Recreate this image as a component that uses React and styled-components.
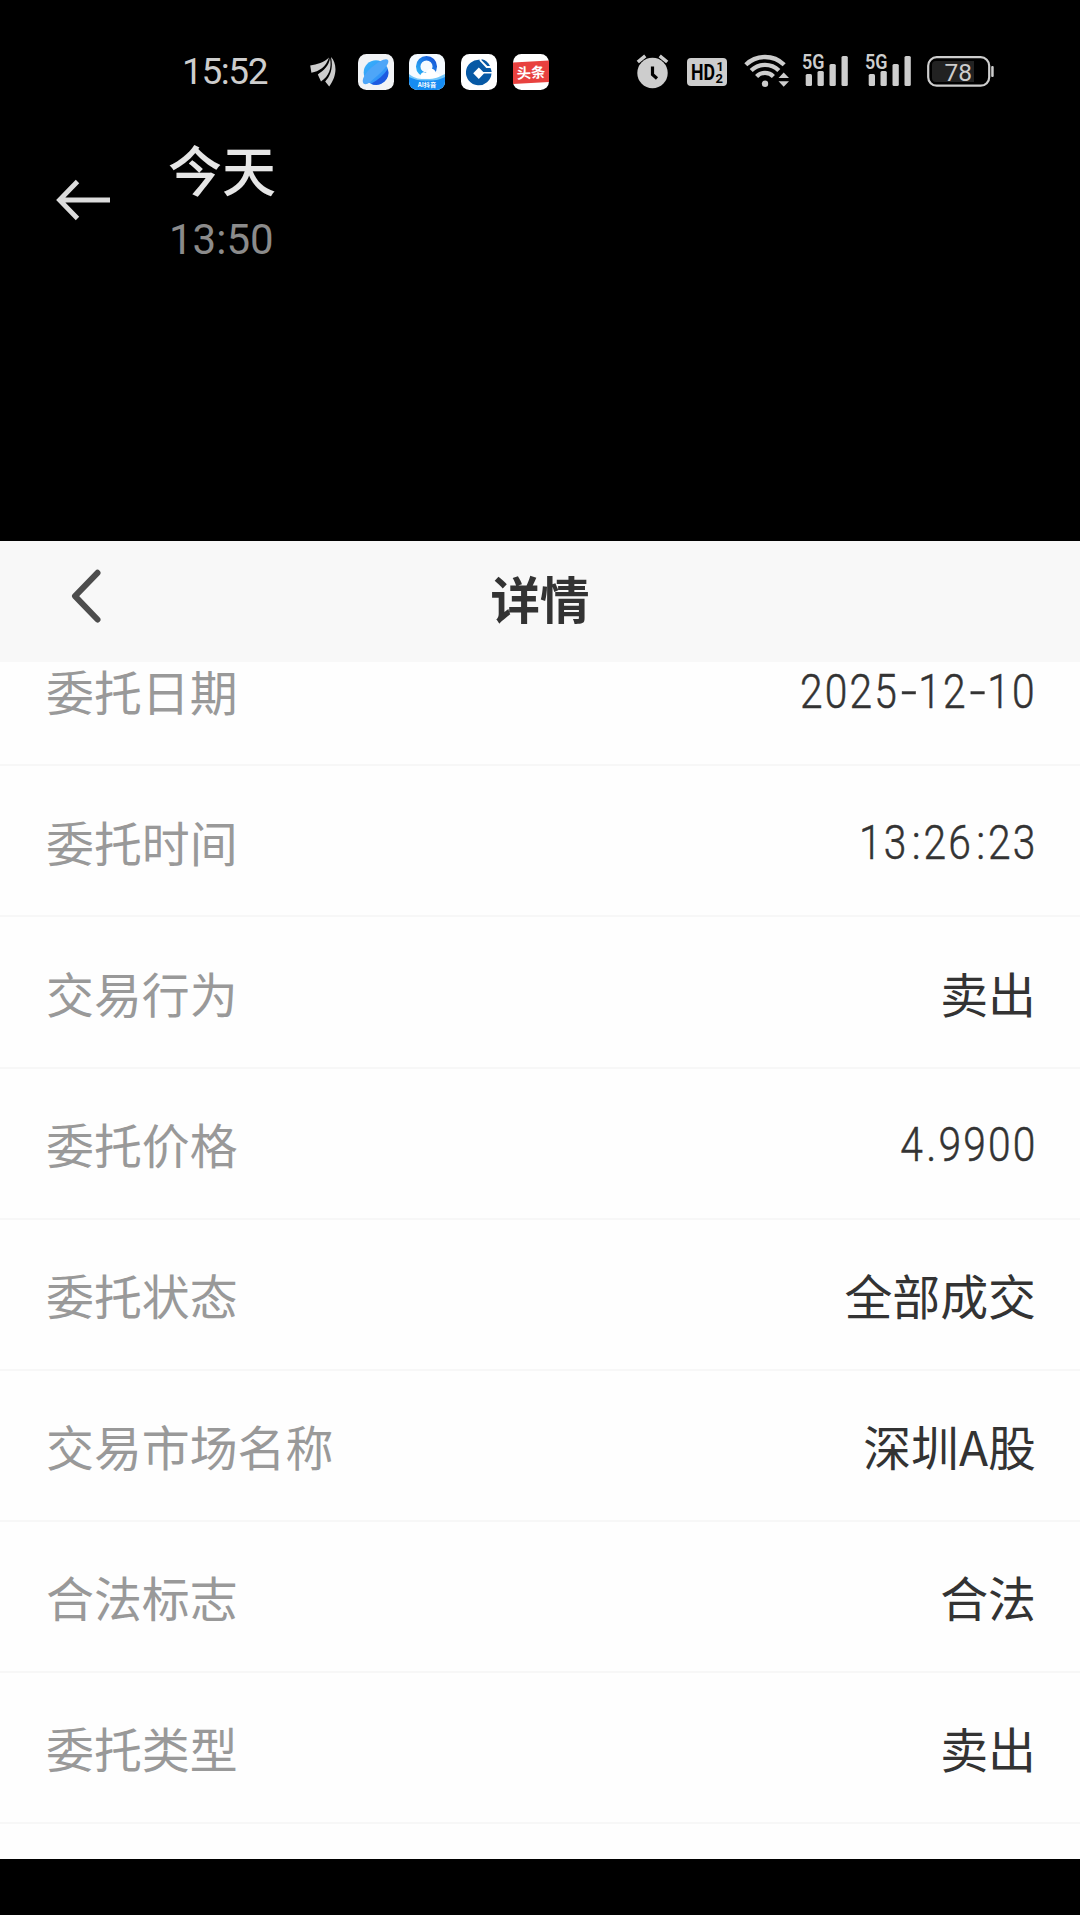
import React from "react";
import styled, { createGlobalStyle } from "styled-components";

const Global = createGlobalStyle`
  * { box-sizing: border-box; }
  body { margin: 0; background: #000; font-family: "Noto Sans CJK SC", sans-serif; }
`;

const Screen = styled.div`
  width: 1080px;
  height: 1915px;
  overflow: hidden;
  background: #000;
  display: flex;
  flex-direction: column;
`;

const StatusBar = styled.div`
  height: 130px;
  padding: 14px 85px 0 182px;
  display: flex;
  align-items: center;
  flex: none;
`;

const Clock = styled.span`
  width: 127px;
  font: 400 37px/40px Roboto, sans-serif;
  letter-spacing: -1.4px;
  color: #cdcdcd;
`;

const Icon = styled.svg`
  display: block;
  flex: none;
  margin-left: ${(p) => p.$gap || 0}px;
`;

const Spacer = styled.div`
  flex: 1;
`;

const TopBar = styled.div`
  height: 411px;
  padding: 9px 56px 0;
  display: flex;
  align-items: flex-start;
  flex: none;
`;

const TitleBlock = styled.div`
  margin: -5px 0 0 57px;
  display: flex;
  flex-direction: column;
`;

const Day = styled.div`
  font-size: 54px;
  line-height: 70px;
  font-weight: 500;
  color: #e6e6e6;
`;

const Time = styled.div`
  font: 400 42px/50px Roboto, sans-serif;
  margin: 11px 0 0 1px;
  color: #8b8b8b;
`;

const Panel = styled.main`
  height: 1318px;
  flex: none;
  background: #fefefe;
`;

const Header = styled.header`
  height: 121px;
  padding-bottom: 7px;
  background: #f8f8f8;
  display: grid;
  grid-template-columns: 200px 1fr 200px;
  align-items: center;
`;

const Heading = styled.h1`
  margin: 0;
  text-align: center;
  font-size: 49.5px;
  line-height: 70px;
  font-weight: 700;
  color: #333;
`;

const List = styled.div`
  height: 1197px;
  display: flex;
  flex-direction: column;
  justify-content: flex-end;
  padding-bottom: 35px;
`;

const Row = styled.div`
  height: 151.1px;
  flex: none;
  padding: 0 44px 0 46px;
  display: flex;
  align-items: center;
  justify-content: space-between;
  border-bottom: 2px solid #f7f7f7;
`;

const Label = styled.span`
  font-size: 47.9px;
  line-height: 54px;
  color: #999;
`;

const Value = styled.span`
  font-size: 47.9px;
  line-height: 54px;
  color: #333;
`;

const NumberValue = styled.span`
  font: 300 48.5px/54px Roboto, sans-serif;
  letter-spacing: 2.5px;
  margin-right: -1px;
  padding-top: 4px;
  color: #333;
  -webkit-text-stroke: 0.5px #333;
  transform: scaleX(0.84);
  transform-origin: right center;
`;

const Mark = styled.span`
  display: inline-block;
  width: ${(p) => p.$width}px;
  letter-spacing: 0;
  text-align: center;
  transform: scaleX(${(p) => p.$stretch});
`;

const marks = {
  "-": { $width: 23.2, $stretch: 1.4 },
  ":": { $width: 18, $stretch: 1.1 },
  ".": { $width: 16.4, $stretch: 1.1 },
};

const rows = [
  ["委托日期", "2025-12-10"],
  ["委托时间", "13:26:23"],
  ["交易行为", "卖出"],
  ["委托价格", "4.9900"],
  ["委托状态", "全部成交"],
  ["交易市场名称", "深圳A股"],
  ["合法标志", "合法"],
  ["委托类型", "卖出"],
];

const Figure = ({ text }) => (
  <NumberValue>
    {text.split(/([-:.])/).map((part, i) =>
      marks[part] ? <Mark key={i} {...marks[part]}>{part}</Mark> : part
    )}
  </NumberValue>
);

const G = "#cdcdcd";

const Wing = () => (
  <Icon width="28" height="32" viewBox="0 0 28 32" fill={G}>
    <path d="M20 1.500C15 6.500 8 8.500 1.200 9.500l1.200 7.200C10 15.500 17 11 20 1.500z" />
    <path d="M21 2C20 10 15 14 8.800 18.500L12 25.500C20 20 23 12 21 2z" />
    <path d="M22 1c5.500 5.500 7 18-1.800 29.500L16.200 25.500C22.500 19 24 10 22 1z" />
  </Icon>
);

const BrowserApp = () => (
  <Icon width="36" height="36" viewBox="0 0 36 36" $gap={20.5}>
    <defs>
      <linearGradient id="planet" x1="0" y1="0" x2="1" y2="1">
        <stop offset="0" stopColor="#38b4fb" />
        <stop offset="1" stopColor="#2f86f6" />
      </linearGradient>
    </defs>
    <rect width="36" height="36" rx="8.500" fill="#f1f3f6" />
    <circle cx="18" cy="18.500" r="12.300" fill="url(#planet)" />
    <path d="M5.500 29.500C3 26 7 19 14 13S28 3.500 30 6c2 3-4 10-11 16S8.500 32 5.500 29.500z" fill="#4ea6f8" />
    <path d="M29.800 15A12.300 12.300 0 0 1 13 29.800C20 26 26 21 29.800 15z" fill="#1d5ae0" />
  </Icon>
);

const CloudApp = () => (
  <Icon width="36" height="36" viewBox="0 0 36 36" $gap={15.5}>
    <defs>
      <linearGradient id="ring" x1="0" y1="1" x2="1" y2="0">
        <stop offset="0" stopColor="#2ab4f8" />
        <stop offset="1" stopColor="#1452d6" />
      </linearGradient>
      <clipPath id="tile"><rect width="36" height="36" rx="8.500" /></clipPath>
    </defs>
    <g clipPath="url(#tile)">
      <rect width="36" height="36" fill="#f4faff" />
      <circle cx="17.500" cy="12.500" r="8.300" fill="none" stroke="url(#ring)" strokeWidth="4.500" />
      <path d="M12 24c-2-4 2-7 5-5 2-6 9-5 10 0 4 0 5 4 2 6z" fill="#fff" />
      <path d="M0 20c7 5 10 5 18 5s12-2 18-5v16H0z" fill="#71c7fc" />
      <path d="M0 23c7 3 10 3.500 18 3.500S30 26 36 23v13H0z" fill="#168cf2" />
      <text x="18" y="33.200" textAnchor="middle" fontSize="6.200" fontWeight="700" fill="#fff" fontFamily="Noto Sans CJK SC, sans-serif">AI抖音</text>
    </g>
  </Icon>
);

const BankApp = () => (
  <Icon width="36" height="36" viewBox="0 0 36 36" $gap={16}>
    <rect width="36" height="36" rx="8.500" fill="#fff" />
    <path d="M19 5.800A12.800 12.800 0 1 0 30.500 19.500h-7.500L17.800 25 12.200 19.200l5.600-5.800 4.500 4.500h8.400c-.2-1.500-.6-2.800-1.200-4h-4.200L18.400 6.500z" fill="#0759a5" />
    <path d="M20.800 5.300c3.600.7 6.500 3.200 8.200 6.700h-2.700L20.300 6z" fill="#0759a5" />
  </Icon>
);

const NewsApp = () => (
  <Icon width="36" height="36" viewBox="0 0 36 36" $gap={16}>
    <rect width="36" height="36" rx="8.500" fill="#fff" />
    <path d="M0 8.500l36-2v21.500L0 30z" fill="#e8413f" />
    <text x="18" y="24" textAnchor="middle" fontSize="14.300" fontWeight="700" fill="#fff" fontFamily="Noto Sans CJK SC, sans-serif" transform="rotate(-3 18 18)">头条</text>
  </Icon>
);

const Alarm = () => (
  <Icon width="34" height="36" viewBox="0 0 34 36">
    <circle cx="16.500" cy="19" r="15.200" fill={G} />
    <path d="M1.800 8L9.300 1.800M31.200 8L23.700 1.800" stroke={G} strokeWidth="3.500" />
    <path d="M16.500 12.500v8l4.500 4" fill="none" stroke="#000" strokeWidth="3.200" />
  </Icon>
);

const HdBadge = () => (
  <Icon width="40" height="28" viewBox="0 0 40 28" $gap={16.5} fontFamily="Roboto, sans-serif" fontWeight="700">
    <rect width="40" height="28" rx="4" fill={G} />
    <text x="4" y="22" fontSize="22.500" textLength="24" lengthAdjust="spacingAndGlyphs">HD</text>
    <text x="29.500" y="13" fontSize="12.500">1</text>
    <text x="28.500" y="25" fontSize="13">2</text>
  </Icon>
);

const Wifi = () => (
  <Icon width="46" height="36" viewBox="0 -1 46 36" $gap={17.5}>
    <g fill="none" stroke={G} strokeWidth="4.300">
      <path d="M1.800 9.800a27.500 27.500 0 0 1 38.400 0" />
      <path d="M7.200 15.600a19.500 19.500 0 0 1 27.600 0" />
      <path d="M12.600 21.400a11.800 11.800 0 0 1 16.800 0" />
    </g>
    <circle cx="21" cy="28.800" r="3.200" fill={G} />
    <path d="M34.500 23l5.200-5.500L45 23zM34.500 26.300l5.200 5.500 5.300-5.500z" fill={G} />
  </Icon>
);

const Signal = ({ gap }) => (
  <Icon width="47" height="48" viewBox="0 48 47 48" $gap={gap} fill={G}>
    <rect x="3.700" y="74" width="6.300" height="12" rx="1.500" />
    <rect x="15.500" y="71" width="6.300" height="15" rx="1.500" />
    <rect x="27.500" y="64" width="6.300" height="22" rx="1.500" />
    <rect x="39.500" y="56" width="6.300" height="30" rx="1.500" />
    <text x="0" y="69" fontSize="20.300" fontWeight="600" fontFamily="Roboto, sans-serif" textLength="22.500" lengthAdjust="spacingAndGlyphs">5G</text>
  </Icon>
);

const Battery = () => (
  <Icon width="68" height="32" viewBox="0 0 68 32" $gap={15}>
    <rect x="1.200" y="1.200" width="61" height="28.500" rx="8.500" fill="none" stroke={G} strokeWidth="2.200" />
    <path d="M9 5h38v21H9a4 4 0 0 1-4-4V9a4 4 0 0 1 4-4z" fill="#222" />
    <rect x="64.200" y="10" width="2.500" height="11" rx="1" fill={G} />
    <text x="31.300" y="24.700" textAnchor="middle" fontSize="24.500" fill={G} fontFamily="Roboto, sans-serif">78</text>
  </Icon>
);

export default function App() {
  return (
    <Screen>
      <Global />
      <StatusBar>
        <Clock>15:52</Clock>
        <Wing />
        <BrowserApp />
        <CloudApp />
        <BankApp />
        <NewsApp />
        <Spacer />
        <Alarm />
        <HdBadge />
        <Wifi />
        <Signal gap={12} />
        <Signal gap={16} />
        <Battery />
      </StatusBar>
      <TopBar>
        <Icon width="55" height="122" viewBox="0 0 55 122" fill="none" stroke="#dcdcdc" strokeWidth="4.800">
          <path d="M21.500 42.500L3.500 61l18 18.500M4 61h50" />
        </Icon>
        <TitleBlock>
          <Day>今天</Day>
          <Time>13:50</Time>
        </TitleBlock>
      </TopBar>
      <Panel>
        <Header>
          <Icon width="36" height="60" viewBox="0 0 36 60" $gap={67.5} fill="none" stroke="#4d4d4d" strokeWidth="6" strokeLinecap="round" strokeLinejoin="round">
            <path d="M29.500 4.800L7 28.200l22.500 23.300" />
          </Icon>
          <Heading>详情</Heading>
        </Header>
        <List>
          {rows.map(([label, value], i) => (
            <Row key={i}>
              <Label>{label}</Label>
              {/^[\d\-:.]+$/.test(value) ? <Figure text={value} /> : <Value>{value}</Value>}
            </Row>
          ))}
        </List>
      </Panel>
    </Screen>
  );
}
